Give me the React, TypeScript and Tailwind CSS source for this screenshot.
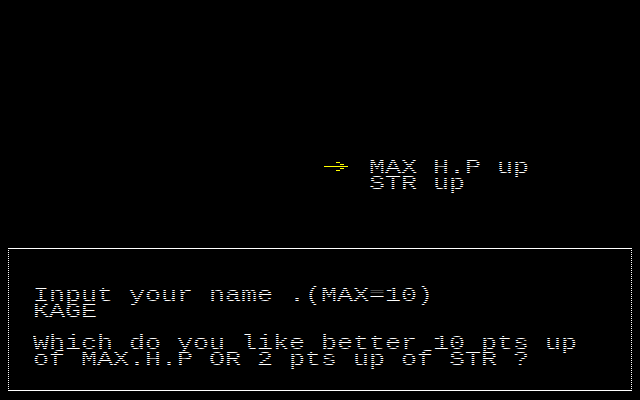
const mono = { fontFamily: '"Liberation Mono", "DejaVu Sans Mono", monospace' };

function Line({ children }: { children: string }) {
  return (
    <div className="h-4 origin-left scale-x-[1.3333] whitespace-pre text-[20px] leading-4">{children}</div>
  );
}

function Arrow() {
  return (
    <svg width="24" height="16" viewBox="0 0 24 16" className="block" shapeRendering="crispEdges">
      <g fill="#ffff00">
        <rect x="12" y="2" width="4" height="1" />
        <rect x="16" y="4" width="4" height="1" />
        <rect x="0" y="6" width="24" height="1" />
        <rect x="16" y="8" width="4" height="1" />
        <rect x="12" y="10" width="4" height="1" />
      </g>
    </svg>
  );
}

export default function App() {
  return (
    <div className="relative h-[400px] w-[640px] overflow-hidden bg-black text-white" style={mono}>
      <div className="flex pl-[324px] pt-[160px]">
        <div className="w-[45px]">
          <Arrow />
        </div>
        <div>
          <Line>MAX H.P up</Line>
          <Line>STR up</Line>
        </div>
      </div>

      <div className="ml-[8px] mt-[56px] h-[143px] w-[624px] border border-white pl-[24px] pt-[39px]">
        <Line>Input your name .(MAX=10)</Line>
        <Line>KAGE</Line>
        <div className="h-4" />
        <Line>Which do you like better 10 pts up</Line>
        <Line>of MAX.H.P OR 2 pts up of STR ?</Line>
      </div>

      {/* scanlines: every odd row is blanked out */}
      <div className="pointer-events-none absolute inset-0 bg-[repeating-linear-gradient(to_bottom,transparent_0_1px,#000_1px_2px)]" />
    </div>
  );
}
